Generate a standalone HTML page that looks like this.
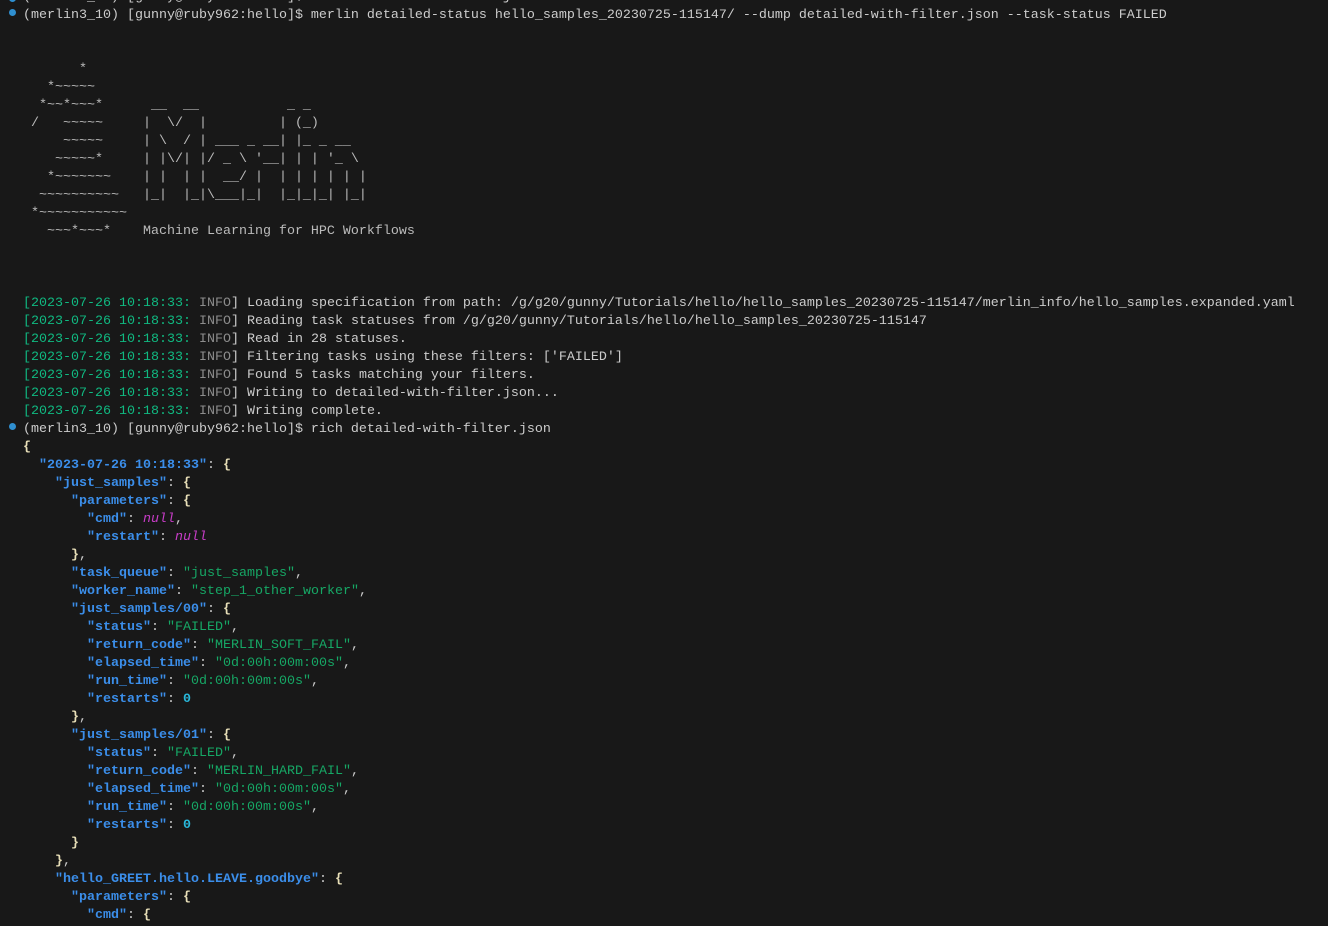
<!DOCTYPE html>
<html><head><meta charset="utf-8"><style>
html,body{margin:0;padding:0;background:#181818;width:1328px;height:926px;overflow:hidden}
pre{position:absolute;left:23px;top:-11px;margin:0;font-family:"Liberation Mono",monospace;font-size:13.33px;line-height:18px;color:#cccccc;white-space:pre}
.dot{position:absolute;left:9px;width:7px;height:7px;border-radius:50%;background:#2f8fd0}
.g{color:#10b981}.i{color:#8c8c8c}
.k{color:#3b8eea;font-weight:bold}
.s{color:#16a765}
.n{color:#c93dc9;font-style:italic}
.z{color:#29b8db;font-weight:bold}
.b{color:#e8dfb8;font-weight:bold}
.t{color:#bbbbbb}
</style></head><body>
<div class="dot" style="top:-5px"></div>
<div class="dot" style="top:9px"></div>
<div class="dot" style="top:423px"></div>
<pre>(merlin3_10) [gunny@ruby962:hello]$ rm detailed-with-filter.json
(merlin3_10) [gunny@ruby962:hello]$ merlin detailed-status hello_samples_20230725-115147/ --dump detailed-with-filter.json --task-status FAILED


<span class="t">       *
   *~~~~~
  *~~*~~~*      __  __           _ _
 /   ~~~~~     |  \/  |         | (_)
     ~~~~~     | \  / | ___ _ __| |_ _ __
    ~~~~~*     | |\/| |/ _ \ '__| | | '_ \
   *~~~~~~~    | |  | |  __/ |  | | | | | |
  ~~~~~~~~~~   |_|  |_|\___|_|  |_|_|_| |_|
 *~~~~~~~~~~~
   ~~~*~~~*    Machine Learning for HPC Workflows</span>



<span class="g">[2023-07-26 10:18:33:</span> <span class="i">INFO</span>] Loading specification from path: /g/g20/gunny/Tutorials/hello/hello_samples_20230725-115147/merlin_info/hello_samples.expanded.yaml
<span class="g">[2023-07-26 10:18:33:</span> <span class="i">INFO</span>] Reading task statuses from /g/g20/gunny/Tutorials/hello/hello_samples_20230725-115147
<span class="g">[2023-07-26 10:18:33:</span> <span class="i">INFO</span>] Read in 28 statuses.
<span class="g">[2023-07-26 10:18:33:</span> <span class="i">INFO</span>] Filtering tasks using these filters: ['FAILED']
<span class="g">[2023-07-26 10:18:33:</span> <span class="i">INFO</span>] Found 5 tasks matching your filters.
<span class="g">[2023-07-26 10:18:33:</span> <span class="i">INFO</span>] Writing to detailed-with-filter.json...
<span class="g">[2023-07-26 10:18:33:</span> <span class="i">INFO</span>] Writing complete.
(merlin3_10) [gunny@ruby962:hello]$ rich detailed-with-filter.json
<span class="b">{</span>
  <span class="k">"2023-07-26 10:18:33"</span>: <span class="b">{</span>
    <span class="k">"just_samples"</span>: <span class="b">{</span>
      <span class="k">"parameters"</span>: <span class="b">{</span>
        <span class="k">"cmd"</span>: <span class="n">null</span>,
        <span class="k">"restart"</span>: <span class="n">null</span>
      <span class="b">}</span>,
      <span class="k">"task_queue"</span>: <span class="s">"just_samples"</span>,
      <span class="k">"worker_name"</span>: <span class="s">"step_1_other_worker"</span>,
      <span class="k">"just_samples/00"</span>: <span class="b">{</span>
        <span class="k">"status"</span>: <span class="s">"FAILED"</span>,
        <span class="k">"return_code"</span>: <span class="s">"MERLIN_SOFT_FAIL"</span>,
        <span class="k">"elapsed_time"</span>: <span class="s">"0d:00h:00m:00s"</span>,
        <span class="k">"run_time"</span>: <span class="s">"0d:00h:00m:00s"</span>,
        <span class="k">"restarts"</span>: <span class="z">0</span>
      <span class="b">}</span>,
      <span class="k">"just_samples/01"</span>: <span class="b">{</span>
        <span class="k">"status"</span>: <span class="s">"FAILED"</span>,
        <span class="k">"return_code"</span>: <span class="s">"MERLIN_HARD_FAIL"</span>,
        <span class="k">"elapsed_time"</span>: <span class="s">"0d:00h:00m:00s"</span>,
        <span class="k">"run_time"</span>: <span class="s">"0d:00h:00m:00s"</span>,
        <span class="k">"restarts"</span>: <span class="z">0</span>
      <span class="b">}</span>
    <span class="b">}</span>,
    <span class="k">"hello_GREET.hello.LEAVE.goodbye"</span>: <span class="b">{</span>
      <span class="k">"parameters"</span>: <span class="b">{</span>
        <span class="k">"cmd"</span>: <span class="b">{</span>
</pre>
</body></html>
